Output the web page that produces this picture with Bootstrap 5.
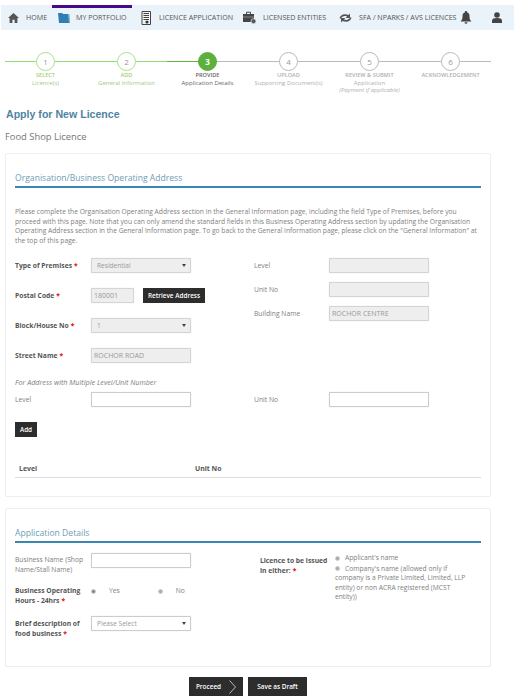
<!DOCTYPE html>
<html lang="en"><head><meta charset="utf-8"><title>Apply for New Licence</title>
<link rel="stylesheet" href="https://cdn.jsdelivr.net/npm/bootstrap@5.3.0/dist/css/bootstrap.min.css">
<style>
html,body{margin:0;background:#fff;font-family:"Open Sans",sans-serif;color:#808080;font-size:6.75px;line-height:9.6px}
.page-wrap{width:514px;height:698px;overflow:hidden;padding-top:5px}
.top-accent{height:3px;width:80px;background:#46088c;margin-left:52px;margin-bottom:-3px;position:relative}
.top-nav{height:25px;margin-left:1px;background:#ebf3fa;color:#555;font-size:7.1px;padding-left:7px;white-space:nowrap}
.top-nav svg{display:block;flex:none}
.nav-it{display:flex;align-items:center}
.stepper{display:flex;margin:22px 0 0 5px;width:486px}
.step{width:81px;position:relative;text-align:center;font-size:6px;line-height:7.7px;color:#b0b0b0;height:55px}
.step::before{content:"";position:absolute;left:0;right:0;top:9px;height:1px;background:#bbb}
.step.done::before{background:#8fdc72}
.step.now::before{background:linear-gradient(90deg,#5cb83c 50%,#bbb 50%);}
.step-dot{position:relative;width:19px;height:19px;border-radius:50%;background:#fff;border:1px solid #bbb;margin:0 auto 1px;font-size:8px;line-height:17px;color:#999}
.step.done .step-dot{border-color:#a5e58c}
.step.now .step-dot{background:#5cb03c;border-color:#5cb03c;color:#fff;font-weight:700}
.step.done{color:#a9cf73}
.step.done .sub{color:#a5c884}
.step.now{color:#666}
.step .ttl{font-weight:600;font-size:5.6px}
.page-h{font-family:"Liberation Sans",sans-serif;font-weight:700;font-size:10.6px;line-height:14px;color:#4d84a3;margin:0 0 0 6px}
.sub-h{font-size:9.4px;line-height:12px;color:#777;margin:10px 0 0 5px}
.panel-box{width:486px;margin-left:5px;border:1px solid #eee;border-radius:2px;padding:0 9px}
.panel-one{margin-top:10px;height:344px}
.panel-two{margin-top:11px;height:159px}
.panel-ttl{font-size:8.6px;line-height:12px;color:#6e9cb8;border-bottom:2px solid #3a86b7;padding-bottom:2px;margin-top:18px}
.notice{font-size:6.7px;line-height:9.6px;margin:19px 0 0;padding-right:2px;color:#808080}
.f-row{display:flex;align-items:center}
.f-lab{width:76px;flex:none}
.f-lab.strong{font-weight:700;color:#555}
.req{color:#e00;font-weight:700;margin-left:2px}
.f-in{width:100px;height:15px;border:1px solid #ccc;border-radius:1px;background:#fff;font-size:7px;line-height:13px;padding:0 2px;color:#999;box-shadow:0 0 1px #ccc;position:relative}
.f-in.off{background:#eee;border-color:#d4d4d4}
.f-in.pick{padding-left:5px;font-size:6.6px}
.f-in.pick::after{content:"";position:absolute;right:4px;top:5px;border:2px solid transparent;border-top:3px solid #444;border-bottom:0}
.f-in.short{width:43px}
.dark-btn{background:#2d2d2d;color:#fff;font-weight:600;font-size:6.4px;border:0;border-radius:0;padding:0}
.gap-btn{margin-left:9px}
.cols-one{display:flex;margin-top:5px;align-items:flex-start}
.col-a{width:239px;flex:none}
.col-a .f-row{height:30px}
.col-b{padding-top:3px}
.col-b .f-row{height:24px}
.col-b .f-lab{width:75px}
.multi-note{font-size:7.2px;margin-top:8px}
.lines-form{margin-top:4px}
.lines-form .col-b{padding-top:0}
.tbl-head{display:flex;font-weight:700;color:#555;border-bottom:1px solid #ddd;height:14px;margin-top:27px;padding-left:4px;font-size:6.9px}
.pick-opt{display:inline-block;width:5px;height:5px;border-radius:50%;background:#aaa;border:1px solid #ccc;vertical-align:middle}
.pick-opt.on{background:#888}
.col-a .detail-a{height:33px}
.licence-col{padding-left:6px}
.licence-lab{width:75px;padding-top:3px}
.licence-opts{width:135px;font-size:6.7px}
.foot-row{margin-top:10px;gap:5px;margin-left:189px}
</style></head><body>
<div class="page-wrap">
<div class="top-accent"></div>
<nav class="top-nav d-flex align-items-center">
 <div class="nav-it" style="width:50px"><svg width="11" height="10" viewBox="0 0 11 10"><path d="M5.500 0 0 5h1.600v5h2.800V6.800h2.200V10h2.800V5H11z" fill="#555"/></svg><span style="margin-left:7px">HOME</span></div>
 <div class="nav-it" style="width:83px"><svg width="12" height="11" viewBox="0 0 12 11"><path d="M0 1h4l1 1h6l1 9H1z" fill="#2f7fb5"/><path d="M10 2h1.500L12 10l-1 1z" fill="#8fb9d6"/></svg><span style="margin-left:6px">MY PORTFOLIO</span></div>
 <div class="nav-it" style="width:102px"><svg width="11" height="14" viewBox="0 0 11 14"><path d="M1 .5h8.500v13H1z" fill="#f4f4f4" stroke="#444"/><path d="M2.500 2.500h5.500M2.500 4.500h5.500M2.500 6.500h5.500M2.500 8.500h5.500" stroke="#444"/><circle cx="6" cy="11" r="1.600" fill="#333"/></svg><span style="margin-left:7px">LICENCE APPLICATION</span></div>
 <div class="nav-it" style="width:95px"><svg width="13" height="13" viewBox="0 0 13 13"><path d="M0 3h11v8H0z" fill="#444"/><path d="M3.500 3V1.200h4V3" fill="none" stroke="#444"/><path d="M0 6h11" stroke="#bbb" stroke-width=".6"/><circle cx="10.500" cy="10.200" r="2.500" fill="#555" stroke="#ebf3fa" stroke-width=".7"/></svg><span style="margin-left:7px">LICENSED ENTITIES</span></div>
 <div class="nav-it" style="width:122px"><svg width="15" height="10" viewBox="0 0 15 10"><path d="M1.500 5.500C2 2 6 0 10.500 2L12 .6V5H7.600l1.500-1.500C6 2.500 4 3.500 3 5.500zM13.500 4.500C13 8 9 10 4.500 8L3 9.400V5h4.400L5.900 6.500C9 7.500 11 6.500 12 4.500z" fill="#555"/></svg><span style="margin-left:6px">SFA / NPARKS / AVS LICENCES</span></div>
 <div class="nav-it" style="width:32px"><svg width="12" height="13" viewBox="0 0 12 13"><path d="M6 0a1 1 0 0 1 1 1.300C9 2 9.500 3.500 9.500 5.500c0 2.500.7 3.500 2 5H.5c1.300-1.500 2-2.500 2-5C2.500 3.500 3 2 5 1.300A1 1 0 0 1 6 0z" fill="#444"/><path d="M4.500 11.200h3a1.500 1.500 0 0 1-3 0z" fill="#444"/></svg></div>
 <div class="nav-it"><svg width="10" height="11" viewBox="0 0 10 11"><circle cx="5" cy="3" r="2.800" fill="#444"/><path d="M0 11V8.500C0 6.800 2 6 5 6s5 .8 5 2.500V11z" fill="#444"/></svg></div>
</nav>
<div class="stepper">
 <div class="step done"><div class="step-dot">1</div><div class="ttl">SELECT</div><div class="sub">Licence(s)</div></div>
 <div class="step done"><div class="step-dot">2</div><div class="ttl">ADD</div><div class="sub">General Information</div></div>
 <div class="step now"><div class="step-dot">3</div><div class="ttl">PROVIDE</div><div class="sub">Application Details</div></div>
 <div class="step"><div class="step-dot">4</div><div class="ttl">UPLOAD</div><div class="sub">Supporting Document(s)</div></div>
 <div class="step"><div class="step-dot">5</div><div class="ttl">REVIEW &amp; SUBMIT</div><div class="sub">Application</div><div class="fst-italic">(Payment if applicable)</div></div>
 <div class="step"><div class="step-dot">6</div><div class="ttl">ACKNOWLEDGEMENT</div></div>
</div>
<h1 class="page-h">Apply for New Licence</h1>
<div class="sub-h">Food Shop Licence</div>
<section class="panel-box panel-one">
 <div class="panel-ttl">Organisation/Business Operating Address</div>
 <p class="notice">Please complete the Organisation Operating Address section in the General Information page, including the field Type of Premises, before you proceed with this page. Note that you can only amend the standard fields in this Business Operating Address section by updating the Organisation Operating Address section in the General Information page. To go back to the General Information page, please click on the "General Information" at the top of this page.</p>
 <div class="cols-one">
  <div class="col-a">
   <div class="f-row"><div class="f-lab strong">Type of Premises<span class="req">*</span></div><div class="f-in off pick">Residential</div></div>
   <div class="f-row"><div class="f-lab strong">Postal Code<span class="req">*</span></div><div class="f-in off short">180001</div><button class="dark-btn gap-btn" style="width:62px;height:15px">Retrieve Address</button></div>
   <div class="f-row"><div class="f-lab strong">Block/House No<span class="req">*</span></div><div class="f-in off pick">1</div></div>
   <div class="f-row"><div class="f-lab strong">Street Name<span class="req">*</span></div><div class="f-in off">ROCHOR ROAD</div></div>
  </div>
  <div class="col-b">
   <div class="f-row"><div class="f-lab">Level</div><div class="f-in off"></div></div>
   <div class="f-row"><div class="f-lab">Unit No</div><div class="f-in off"></div></div>
   <div class="f-row"><div class="f-lab">Building Name</div><div class="f-in off">ROCHOR CENTRE</div></div>
  </div>
 </div>
 <div class="fst-italic multi-note">For Address with Multiple Level/Unit Number</div>
 <div class="f-row lines-form">
  <div class="col-a f-row"><div class="f-lab">Level</div><div class="f-in"></div></div>
  <div class="col-b f-row"><div class="f-lab">Unit No</div><div class="f-in"></div></div>
 </div>
 <button class="dark-btn d-block" style="width:22px;height:15px;margin-top:15px">Add</button>
 <div class="tbl-head"><div style="width:176px">Level</div><div>Unit No</div></div>
</section>
<section class="panel-box panel-two">
 <div class="panel-ttl">Application Details</div>
 <div class="d-flex" style="margin-top:10px">
  <div class="col-a">
   <div class="f-row align-items-start detail-a"><div class="f-lab" style="padding-top:2px">Business Name (Shop Name/Stall Name)</div><div class="f-in"></div></div>
   <div class="f-row align-items-start"><div class="f-lab strong">Business Operating Hours - 24hrs<span class="req">*</span></div><div><span class="pick-opt on"></span><span style="margin-left:13px">Yes</span></div><div style="margin-left:38px"><span class="pick-opt"></span><span style="margin-left:13px">No</span></div></div>
   <div class="f-row align-items-start"><div class="f-lab strong" style="padding-top:3px">Brief description of food business<span class="req">*</span></div><div class="f-in pick">Please Select</div></div>
  </div>
  <div class="d-flex licence-col">
   <div class="f-lab strong licence-lab">Licence to be issued in either:<span class="req">*</span></div>
   <div class="licence-opts"><div><span class="pick-opt"></span><span style="margin-left:5px">Applicant's name</span></div><div style="margin-top:1px"><span class="pick-opt"></span><span style="margin-left:5px">Company's name (allowed only if company is a Private Limited, Limited, LLP entity) or non ACRA registered (MCST entity))</span></div></div>
  </div>
 </div>
</section>
<div class="d-flex foot-row">
 <button class="dark-btn d-flex align-items-center justify-content-center" style="width:54px;height:19px">Proceed<svg style="margin-left:8px" width="7" height="14" viewBox="0 0 7 14"><path d="M.5.500l6 6.500-6 6.500" fill="none" stroke="#bbb"/></svg></button>
 <button class="dark-btn" style="width:59px;height:19px">Save as Draft</button>
</div>
</div>
<script src="https://cdn.jsdelivr.net/npm/bootstrap@5.3.0/dist/js/bootstrap.bundle.min.js"></script>
</body></html>
